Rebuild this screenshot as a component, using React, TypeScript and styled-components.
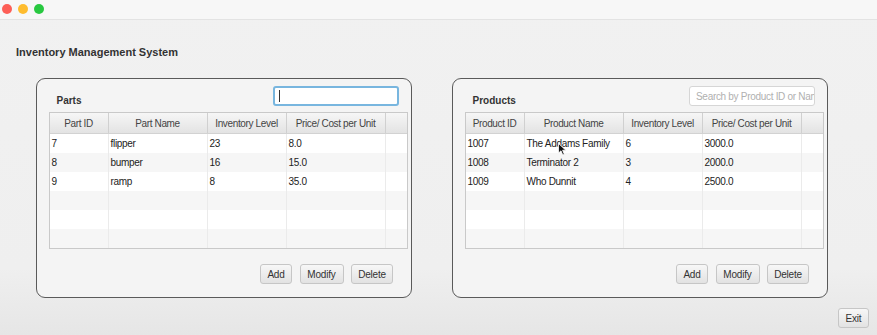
import React from "react";
import styled, { createGlobalStyle } from "styled-components";

const Global = createGlobalStyle`
  html, body { margin: 0; padding: 0; }
  body { font-family: "Liberation Sans", Arial, sans-serif; background: #efefef; }
`;

const Window = styled.div`
  width: 877px;
  height: 335px;
  display: flex;
  flex-direction: column;
  background: linear-gradient(#f1f1f1 0%, #efefef 80%, #e6e6e6 100%);
  overflow: hidden;
`;

const TitleBar = styled.div`
  height: 19px;
  flex: none;
  display: flex;
  align-items: center;
  gap: 6px;
  padding-left: 2px;
  background: #f7f7f7;
  border-bottom: 1px solid #e3e3e3;
`;

const Light = styled.span<{ $c: string }>`
  width: 10px;
  height: 10px;
  border-radius: 50%;
  background: ${(p) => p.$c};
  margin-top: -2px;
`;

const Body = styled.div`
  flex: 1;
  display: flex;
  flex-direction: column;
  padding: 25px 8px 0 16px;
`;

const Heading = styled.h1`
  margin: 0;
  font-size: 11px;
  line-height: 14px;
  font-weight: bold;
  color: #333;
`;

const PanelsRow = styled.div`
  display: flex;
  gap: 40px;
  margin: 19px 0 0 20px;
`;

const Panel = styled.section`
  position: relative;
  width: 376px;
  height: 220px;
  box-sizing: border-box;
  border: 1.5px solid #5a5a5a;
  border-radius: 9px;
  background: #f4f4f4;
  padding: 7px 3px 13px 11.5px;
  display: flex;
  flex-direction: column;
`;

const PanelHeader = styled.div`
  height: 20px;
  display: flex;
  align-items: flex-end;
  justify-content: space-between;
  padding: 0 9px 0 8px;
`;

const PanelLabel = styled.h2`
  margin: 0 0 -1px 0;
  font-size: 10px;
  font-weight: bold;
  color: #333;
  line-height: 12px;
`;

const Search = styled.div<{ $focused?: boolean }>`
  width: 126px;
  height: 20px;
  box-sizing: border-box;
  border-radius: 3px;
  background: #fff;
  border: ${(p) => (p.$focused ? "2px solid #78b6df" : "1px solid #d6d6d6")};
  display: flex;
  align-items: center;
  padding-left: ${(p) => (p.$focused ? "4px" : "6px")};
  overflow: hidden;
  white-space: nowrap;
  font-size: 10px;
  letter-spacing: -0.3px;
  color: #b0b0b0;
`;

const Caret = styled.span`
  width: 1px;
  height: 12px;
  background: #333;
`;

const Table = styled.div`
  margin-top: 6px;
  width: 359px;
  height: 137px;
  box-sizing: border-box;
  border: 1px solid #c9c9c9;
  background: #fff;
  display: flex;
  flex-direction: column;
`;

const cols = "59px 99px 79px 99px 1fr";

const HeaderRow = styled.div`
  display: grid;
  grid-template-columns: ${cols};
  height: 21px;
  background: linear-gradient(#f6f6f6, #e3e3e3);
  border-bottom: 1px solid #d2d2d2;
  box-sizing: border-box;
`;

const HeaderCell = styled.div`
  border-right: 1px solid #d0d0d0;
  display: flex;
  align-items: center;
  justify-content: center;
  font-size: 10px;
  letter-spacing: -0.35px;
  color: #444;
  white-space: nowrap;
  &:last-child { border-right: none; }
`;

const Row = styled.div<{ $alt: boolean }>`
  display: grid;
  grid-template-columns: ${cols};
  height: 19px;
  background: ${(p) => (p.$alt ? "#f6f6f6" : "#ffffff")};
`;

const Cell = styled.div`
  position: relative;
  border-right: 1px solid #ebebeb;
  display: flex;
  align-items: center;
  padding-left: 2px;
  font-size: 10px;
  letter-spacing: -0.3px;
  color: #222;
  white-space: nowrap;
  &:last-child { border-right: none; }
`;

const Cursor = styled.svg`
  position: absolute;
  left: 33px;
  top: 9px;
`;

const ButtonRow = styled.div`
  margin-top: 15px;
  display: flex;
  justify-content: flex-end;
  gap: 7.5px;
  padding-right: 15px;
`;

const Button = styled.button<{ $w: number }>`
  width: ${(p) => p.$w}px;
  height: 20px;
  flex: none;
  padding: 0;
  box-sizing: border-box;
  border: 1px solid #c6c6c6;
  border-radius: 3px;
  background: linear-gradient(#f7f7f7, #e2e2e2);
  font-family: "Liberation Sans", Arial, sans-serif;
  font-size: 10px;
  letter-spacing: -0.2px;
  color: #333;
`;

const Footer = styled.div`
  display: flex;
  justify-content: flex-end;
  margin-top: 10px;
`;

type Props = {
  label: string;
  headers: string[];
  rows: string[][];
  focused?: boolean;
  placeholder?: string;
  cursor?: boolean;
};

const Section: React.FC<Props> = ({ label, headers, rows, focused, placeholder, cursor }) => {
  const all = [...rows];
  while (all.length < 6) all.push(["", "", "", ""]);
  return (
    <Panel>
      <PanelHeader>
        <PanelLabel>{label}</PanelLabel>
        <Search $focused={focused}>{focused ? <Caret /> : placeholder}</Search>
      </PanelHeader>
      <Table>
        <HeaderRow>
          {headers.map((h) => (
            <HeaderCell key={h}>{h}</HeaderCell>
          ))}
          <HeaderCell />
        </HeaderRow>
        {all.map((r, i) => (
          <Row key={i} $alt={i % 2 === 1}>
            {r.map((c, j) => (
              <Cell key={j}>
                {c}
                {cursor && i === 0 && j === 1 && (
                  <Cursor width="9" height="13" viewBox="0 0 9 13">
                    <path d="M0.5 0.5 L0.5 10 L3 7.8 L4.8 12 L6.3 11.3 L4.6 7.2 L7.8 7.2 Z" fill="#111" stroke="#fff" strokeWidth="0.8" />
                  </Cursor>
                )}
              </Cell>
            ))}
            <Cell />
          </Row>
        ))}
      </Table>
      <ButtonRow>
        <Button $w={32}>Add</Button>
        <Button $w={44}>Modify</Button>
        <Button $w={42}>Delete</Button>
      </ButtonRow>
    </Panel>
  );
};

export default function App() {
  return (
    <Window>
      <Global />
      <TitleBar>
        <Light $c="#fd5f57" />
        <Light $c="#febc2e" />
        <Light $c="#28c840" />
      </TitleBar>
      <Body>
        <Heading>Inventory Management System</Heading>
        <PanelsRow>
          <Section
            label="Parts"
            focused
            headers={["Part ID", "Part Name", "Inventory Level", "Price/ Cost per Unit"]}
            rows={[
              ["7", "flipper", "23", "8.0"],
              ["8", "bumper", "16", "15.0"],
              ["9", "ramp", "8", "35.0"],
            ]}
          />
          <Section
            label="Products"
            placeholder="Search by Product ID or Name"
            cursor
            headers={["Product ID", "Product Name", "Inventory Level", "Price/ Cost per Unit"]}
            rows={[
              ["1007", "The Addams Family", "6", "3000.0"],
              ["1008", "Terminator 2", "3", "2000.0"],
              ["1009", "Who Dunnit", "4", "2500.0"],
            ]}
          />
        </PanelsRow>
        <Footer>
          <Button $w={31}>Exit</Button>
        </Footer>
      </Body>
    </Window>
  );
}
